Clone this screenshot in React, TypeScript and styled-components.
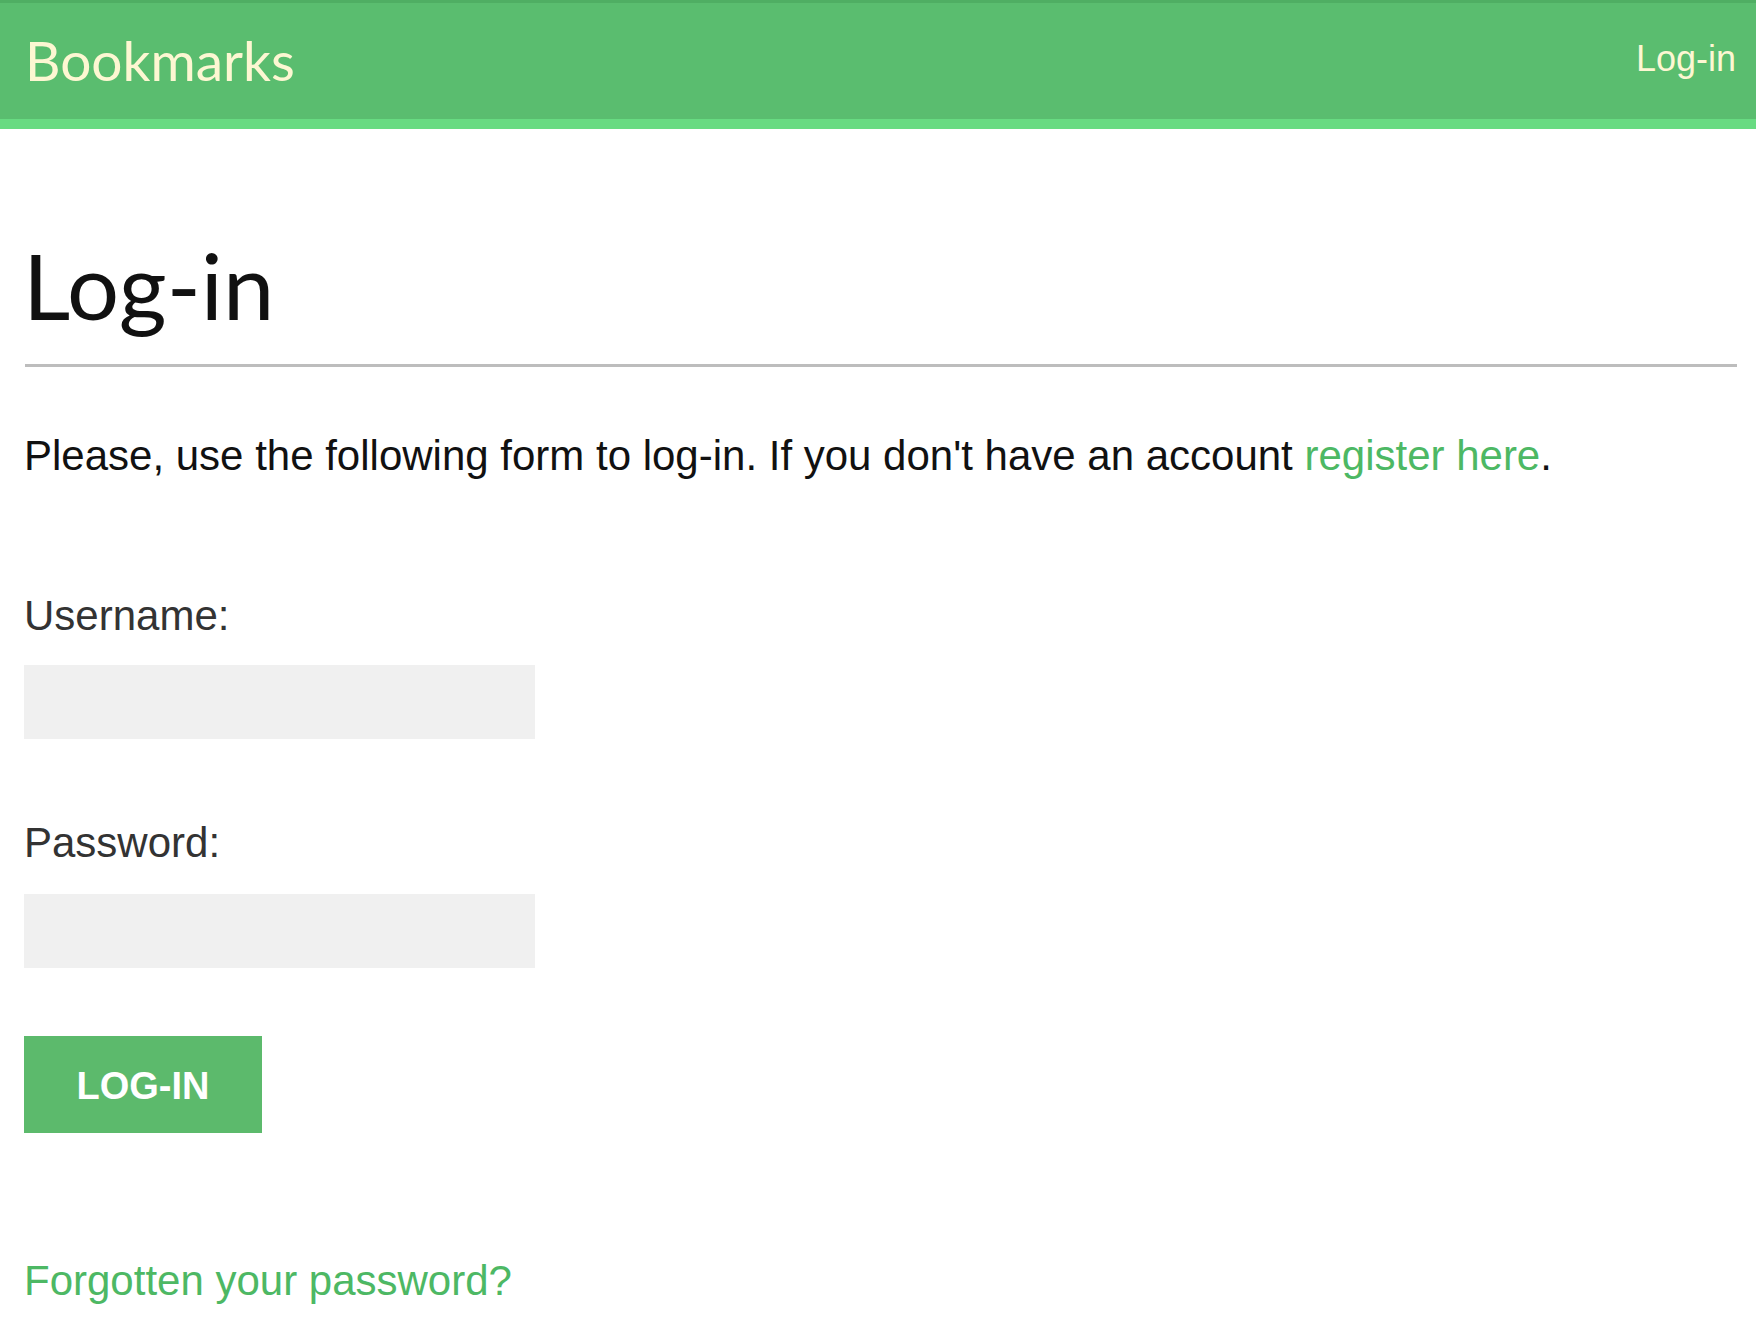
import React from "react";
import styled, { createGlobalStyle } from "styled-components";

const Global = createGlobalStyle`
  html, body { margin: 0; padding: 0; background: #ffffff; }
  body { font-family: "Liberation Sans", Arial, sans-serif; }
`;

const Header = styled.header`
  display: flex;
  align-items: center;
  justify-content: space-between;
  height: 116px;
  padding: 0 20px 0 25px;
  background: #5abd6f;
  border-top: 3px solid #4fae63;
  border-bottom: 10px solid #68db82;
`;

const Logo = styled.span`
  font-family: Lato, "Open Sans", sans-serif;
  font-size: 55px;
  color: #fdf7d2;
  line-height: 1;
  padding-bottom: 2px;
`;

const NavLink = styled.a`
  font-family: "Liberation Sans", Arial, sans-serif;
  font-size: 36px;
  color: #fdf7d2;
  text-decoration: none;
  line-height: 1;
  padding-bottom: 4px;
`;

const Content = styled.main`
  display: flex;
  flex-direction: column;
  align-items: flex-start;
  padding: 0 19px 0 24px;
`;

const Title = styled.h1`
  margin: 110px 0 0 -1px;
  font-family: Lato, "Open Sans", sans-serif;
  font-weight: 400;
  font-size: 92px;
  line-height: 92px;
  color: #111111;
`;

const Rule = styled.hr`
  align-self: stretch;
  margin: 33px 0 0 1px;
  border: none;
  border-top: 3px solid #bdbdbd;
  height: 0;
`;

const Text = styled.p<{ $mt: number; $color?: string }>`
  margin: ${(p) => p.$mt}px 0 0 0;
  font-size: 42px;
  line-height: 48px;
  color: ${(p) => p.$color ?? "#111111"};
`;

const GreenLink = styled.a`
  color: #4db864;
  text-decoration: none;
`;

const Label = styled.label<{ $mt: number }>`
  display: block;
  margin: ${(p) => p.$mt}px 0 0 0;
  font-size: 42px;
  line-height: 48px;
  color: #333333;
`;

const Input = styled.input<{ $mt: number }>`
  display: block;
  box-sizing: border-box;
  margin: ${(p) => p.$mt}px 0 0 0;
  width: 511px;
  height: 74px;
  border: none;
  outline: none;
  background: #f0f0f0;
  font-size: 36px;
  padding: 0 16px;
`;

const Button = styled.button`
  margin-top: 68px;
  width: 238px;
  height: 97px;
  border: none;
  background: #5cba6c;
  color: #ffffff;
  font-family: "Liberation Sans", Arial, sans-serif;
  font-weight: 700;
  font-size: 38px;
  padding: 4px 0 0 0;
  cursor: pointer;
`;

export default function App() {
  return (
    <>
      <Global />
      <Header>
        <Logo>Bookmarks</Logo>
        <NavLink href="#">Log-in</NavLink>
      </Header>
      <Content>
        <Title>Log-in</Title>
        <Rule />
        <Text $mt={65}>
          Please, use the following form to log-in. If you don't have an account{" "}
          <GreenLink href="#">register here</GreenLink>.
        </Text>
        <Label $mt={112} htmlFor="username">Username:</Label>
        <Input $mt={25} id="username" type="text" />
        <Label $mt={80} htmlFor="password">Password:</Label>
        <Input $mt={27} id="password" type="password" />
        <Button type="button">LOG-IN</Button>
        <Text $mt={124}>
          <GreenLink href="#">Forgotten your password?</GreenLink>
        </Text>
      </Content>
    </>
  );
}
